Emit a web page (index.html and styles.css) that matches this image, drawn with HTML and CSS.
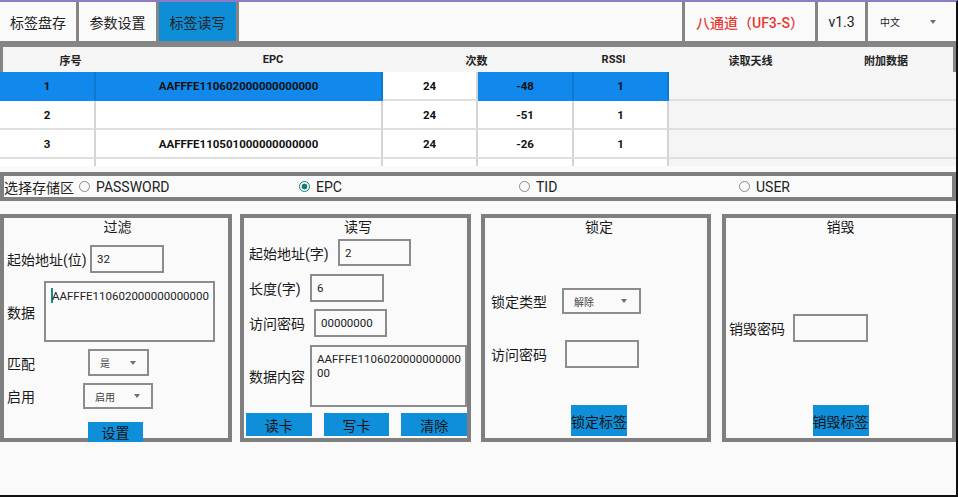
FILE: index.html
```html
<!DOCTYPE html>
<html lang="zh">
<head>
<meta charset="utf-8">
<title>标签读写</title>
<link rel="stylesheet" href="styles.css">
</head>
<body>
<div class="app">
  <div class="topbar">
    <div class="tab">标签盘存</div>
    <div class="tab tab-2">参数设置</div>
    <div class="tab tab-2 tab-active">标签读写</div>
    <div class="tab-blank"></div>
    <div class="model">八通道（UF3-S）</div>
    <div class="ver">v1.3</div>
    <div class="lang"><span>中文</span><span class="caret"></span></div>
  </div>

  <div class="thead">
    <div class="th">序号</div>
    <div class="th">EPC</div>
    <div class="th">次数</div>
    <div class="th">RSSI</div>
    <div class="th">读取天线</div>
    <div class="th">附加数据</div>
  </div>
  <div class="tbody">
    <div class="row row-sel">
      <div class="td td-b">1</div>
      <div class="td td-b">AAFFFE110602000000000000</div>
      <div class="td">24</div>
      <div class="td td-b">-48</div>
      <div class="td td-b">1</div>
      <div class="td td-fill"></div>
    </div>
    <div class="row">
      <div class="td">2</div>
      <div class="td"></div>
      <div class="td">24</div>
      <div class="td">-51</div>
      <div class="td">1</div>
      <div class="td td-fill"></div>
    </div>
    <div class="row">
      <div class="td">3</div>
      <div class="td">AAFFFE110501000000000000</div>
      <div class="td">24</div>
      <div class="td">-26</div>
      <div class="td">1</div>
      <div class="td td-fill"></div>
    </div>
    <div class="row">
      <div class="td"></div>
      <div class="td"></div>
      <div class="td"></div>
      <div class="td"></div>
      <div class="td"></div>
      <div class="td td-fill"></div>
    </div>
  </div>

  <div class="mem">
    <div class="mem-label">选择存储区</div>
    <div class="radio"><span class="dot"></span><span>PASSWORD</span></div>
    <div class="radio"><span class="dot dot-on"></span><span>EPC</span></div>
    <div class="radio"><span class="dot"></span><span>TID</span></div>
    <div class="radio"><span class="dot"></span><span>USER</span></div>
  </div>

  <div class="panels">
    <div class="panel p-filter">
      <div class="ptitle">过滤</div>
      <div class="field f1"><span class="lbl">起始地址(位)</span><div class="input">32</div></div>
      <div class="field f2"><span class="lbl">数据</span><div class="area"><span class="cursor"></span>AAFFFE110602000000000000</div></div>
      <div class="field f3"><span class="lbl">匹配</span><div class="select"><span>是</span><span class="caret"></span></div></div>
      <div class="field f4"><span class="lbl">启用</span><div class="select"><span>启用</span><span class="caret"></span></div></div>
      <div class="btn btn-set">设置</div>
    </div>

    <div class="panel p-rw">
      <div class="ptitle">读写</div>
      <div class="field r1"><span class="lbl">起始地址(字)</span><div class="input">2</div></div>
      <div class="field r2"><span class="lbl">长度(字)</span><div class="input">6</div></div>
      <div class="field r3"><span class="lbl">访问密码</span><div class="input">00000000</div></div>
      <div class="field r4"><span class="lbl">数据内容</span><div class="area">AAFFFE110602000000000000</div></div>
      <div class="btns">
        <div class="btn">读卡</div>
        <div class="btn">写卡</div>
        <div class="btn">清除</div>
      </div>
    </div>

    <div class="panel p-lock">
      <div class="ptitle">锁定</div>
      <div class="field l1"><span class="lbl">锁定类型</span><div class="select"><span>解除</span><span class="caret"></span></div></div>
      <div class="field l2"><span class="lbl">访问密码</span><div class="input"></div></div>
      <div class="btn btn-big btn-lock">锁定标签</div>
    </div>

    <div class="panel p-kill">
      <div class="ptitle">销毁</div>
      <div class="field k1"><span class="lbl">销毁密码</span><div class="input"></div></div>
      <div class="btn btn-big btn-kill">销毁标签</div>
    </div>
  </div>
</div>
</body>
</html>
```

FILE: styles.css
```css
* { box-sizing: border-box; }
body {
  margin: 0;
  background: #fafafa;
  font-family: Roboto, "Noto Sans CJK SC", sans-serif;
  color: #1a1a1a;
}
.app {
  width: 958px;
  height: 497px;
  border-top: 2px solid #8b7cc4;
  border-right: 2px solid #111;
  border-bottom: 2px solid #111;
  background: #fafafa;
  overflow: hidden;
}

/* top bar */
.topbar {
  display: flex;
  gap: 3px;
  height: 39px;
  background: #858585;
}
.tab {
  width: 76px;
  flex: none;
  background: #fafafa;
  display: flex;
  align-items: center;
  justify-content: center;
  font-size: 14px;
  color: #222;
}
.tab-2 { width: 77px; }
.tab-active { background: #0e8ed6; }
.tab-blank { flex: 1; background: #fafafa; }
.model, .ver, .lang {
  flex: none;
  background: #fafafa;
  display: flex;
  align-items: center;
  font-size: 14px;
}
.model { width: 130px; justify-content: center; color: #e53935; font-weight: 500; }
.ver { width: 47px; justify-content: center; color: #222; }
.lang {
  width: 88px;
  justify-content: space-between;
  padding: 0 20px 0 12px;
  font-size: 10px;
  color: #222;
}
.caret {
  width: 0;
  height: 0;
  border-left: 3.5px solid transparent;
  border-right: 3.5px solid transparent;
  border-top: 4px solid #6e6e6e;
}

/* table */
.thead {
  display: grid;
  grid-template-columns: 135px 270px 137px 137px 137px 1fr;
  height: 31px;
  border: 3px solid #858585;
  border-top-width: 6px;
  border-bottom: 0;
  background: #f5f5f5;
}
.th {
  display: flex;
  align-items: center;
  justify-content: center;
  font-size: 11px;
  font-weight: 700;
  color: #222;
}
.tbody { height: 94px; overflow: hidden; }
.row {
  display: grid;
  grid-template-columns: 96px 287px 95px 96px 95px 1fr;
  height: 29px;
}
.td {
  background: #fff;
  border-right: 2px solid #d4d4d4;
  border-bottom: 2px solid #e0e0e0;
  display: flex;
  align-items: center;
  justify-content: center;
  font-size: 11.5px;
  font-weight: 700;
  color: #111;
}
.td-fill { background: #f5f5f5; border-right: 0; }
.row-sel .td-b {
  background: #1088ec;
  border-right-color: #0c78d0;
  border-bottom-color: #1088ec;
}

/* memory bank */
.mem {
  margin-top: 6px;
  height: 29px;
  border: 4px solid #7f7f7f;
  display: flex;
  align-items: center;
  font-size: 14px;
  color: #222;
  background: #fafafa;
}
.mem-label { width: 75px; flex: none; }
.radio {
  width: 220px;
  flex: none;
  display: flex;
  align-items: center;
  gap: 6px;
}
.dot {
  width: 11px;
  height: 11px;
  border: 1.5px solid #8a8a8a;
  border-radius: 50%;
  flex: none;
}
.dot-on {
  border-color: #0f7f73;
  background: radial-gradient(circle, #0f7f73 0 2.6px, transparent 3.2px);
}

/* panels */
.panels {
  display: flex;
  margin-top: 13px;
  height: 228px;
}
.panel {
  height: 228px;
  border: 4px solid #7f7f7f;
  background: #fafafa;
  display: flex;
  flex-direction: column;
  flex: none;
}
.panel > * { flex: none; }
.p-filter { width: 232px; padding-left: 3px; }
.p-rw { width: 231px; margin-left: 8px; padding-left: 5px; }
.p-lock { width: 230px; margin-left: 10px; padding-left: 6px; }
.p-kill { flex: 1; margin-left: 11px; padding-left: 3px; }

.ptitle {
  height: 18px;
  line-height: 18px;
  text-align: center;
  font-size: 14px;
  color: #1a1a1a;
}
.field { display: flex; align-items: center; }
.lbl { flex: none; font-size: 14px; color: #1a1a1a; white-space: nowrap; }
.input, .select, .area {
  flex: none;
  border: 2px solid #8c8c8c;
  background: #fafafa;
}
.input {
  display: flex;
  align-items: center;
  padding-left: 5px;
  font-size: 11.5px;
  color: #222;
  width: 74px;
  height: 28px;
}
.select {
  display: flex;
  align-items: center;
  justify-content: space-between;
  padding: 0 11px 0 10px;
  font-size: 10px;
  color: #444;
}
.area {
  padding: 5px 2px 0 5px;
  font-size: 11.5px;
  line-height: 14px;
  color: #222;
  word-break: break-all;
}
.cursor {
  display: inline-block;
  width: 2px;
  height: 15px;
  margin-right: -1px;
  vertical-align: -3px;
  background: #1b8c83;
}

/* filter panel */
.f1 { margin-top: 9px; }
.f1 .lbl { width: 83px; }
.f2 { margin-top: 8px; }
.f2 .lbl { width: 37px; }
.f2 .area { width: 171px; height: 61px; }
.f3 { margin-top: 7px; }
.f3 .lbl { width: 81px; }
.f3 .select { width: 61px; height: 27px; }
.f4 { margin-top: 7px; }
.f4 .lbl { width: 76px; }
.f4 .select { width: 70px; height: 26px; }

/* read/write panel */
.r1 { margin-top: 3px; }
.r1 .lbl { width: 89px; }
.r1 .input { width: 73px; height: 27px; }
.r2 { margin-top: 8px; }
.r2 .lbl { width: 61px; }
.r3 { margin-top: 7px; }
.r3 .lbl { width: 65px; }
.r3 .input { width: 73px; }
.r4 { margin-top: 8px; }
.r4 .lbl { width: 61px; }
.r4 .area { width: 157px; height: 62px; }

/* lock panel */
.l1 { margin-top: 52px; }
.l1 .lbl { width: 71px; }
.l1 .select { width: 79px; height: 26px; padding-right: 12px; }
.l2 { margin-top: 26px; }
.l2 .lbl { width: 74px; }

/* kill panel */
.k1 { margin-top: 78px; }
.k1 .lbl { width: 64px; }
.k1 .input { width: 75px; }

/* buttons */
.btn {
  background: #0f8fd9;
  color: #151515;
  font-size: 14px;
  display: flex;
  align-items: center;
  justify-content: center;
}
.btn-set {
  margin-top: 13px;
  margin-left: 81px;
  width: 55px;
  height: 20px;
}
.btns {
  display: flex;
  gap: 12px;
  margin-top: 6px;
  margin-left: -3px;
}
.btns .btn { width: 66px; height: 23px; }
.btn-big {
  align-self: center;
  width: 56px;
  height: 31px;
}
.btn-lock { margin-top: 37px; }
.btn-kill { margin-top: 63px; }
```
